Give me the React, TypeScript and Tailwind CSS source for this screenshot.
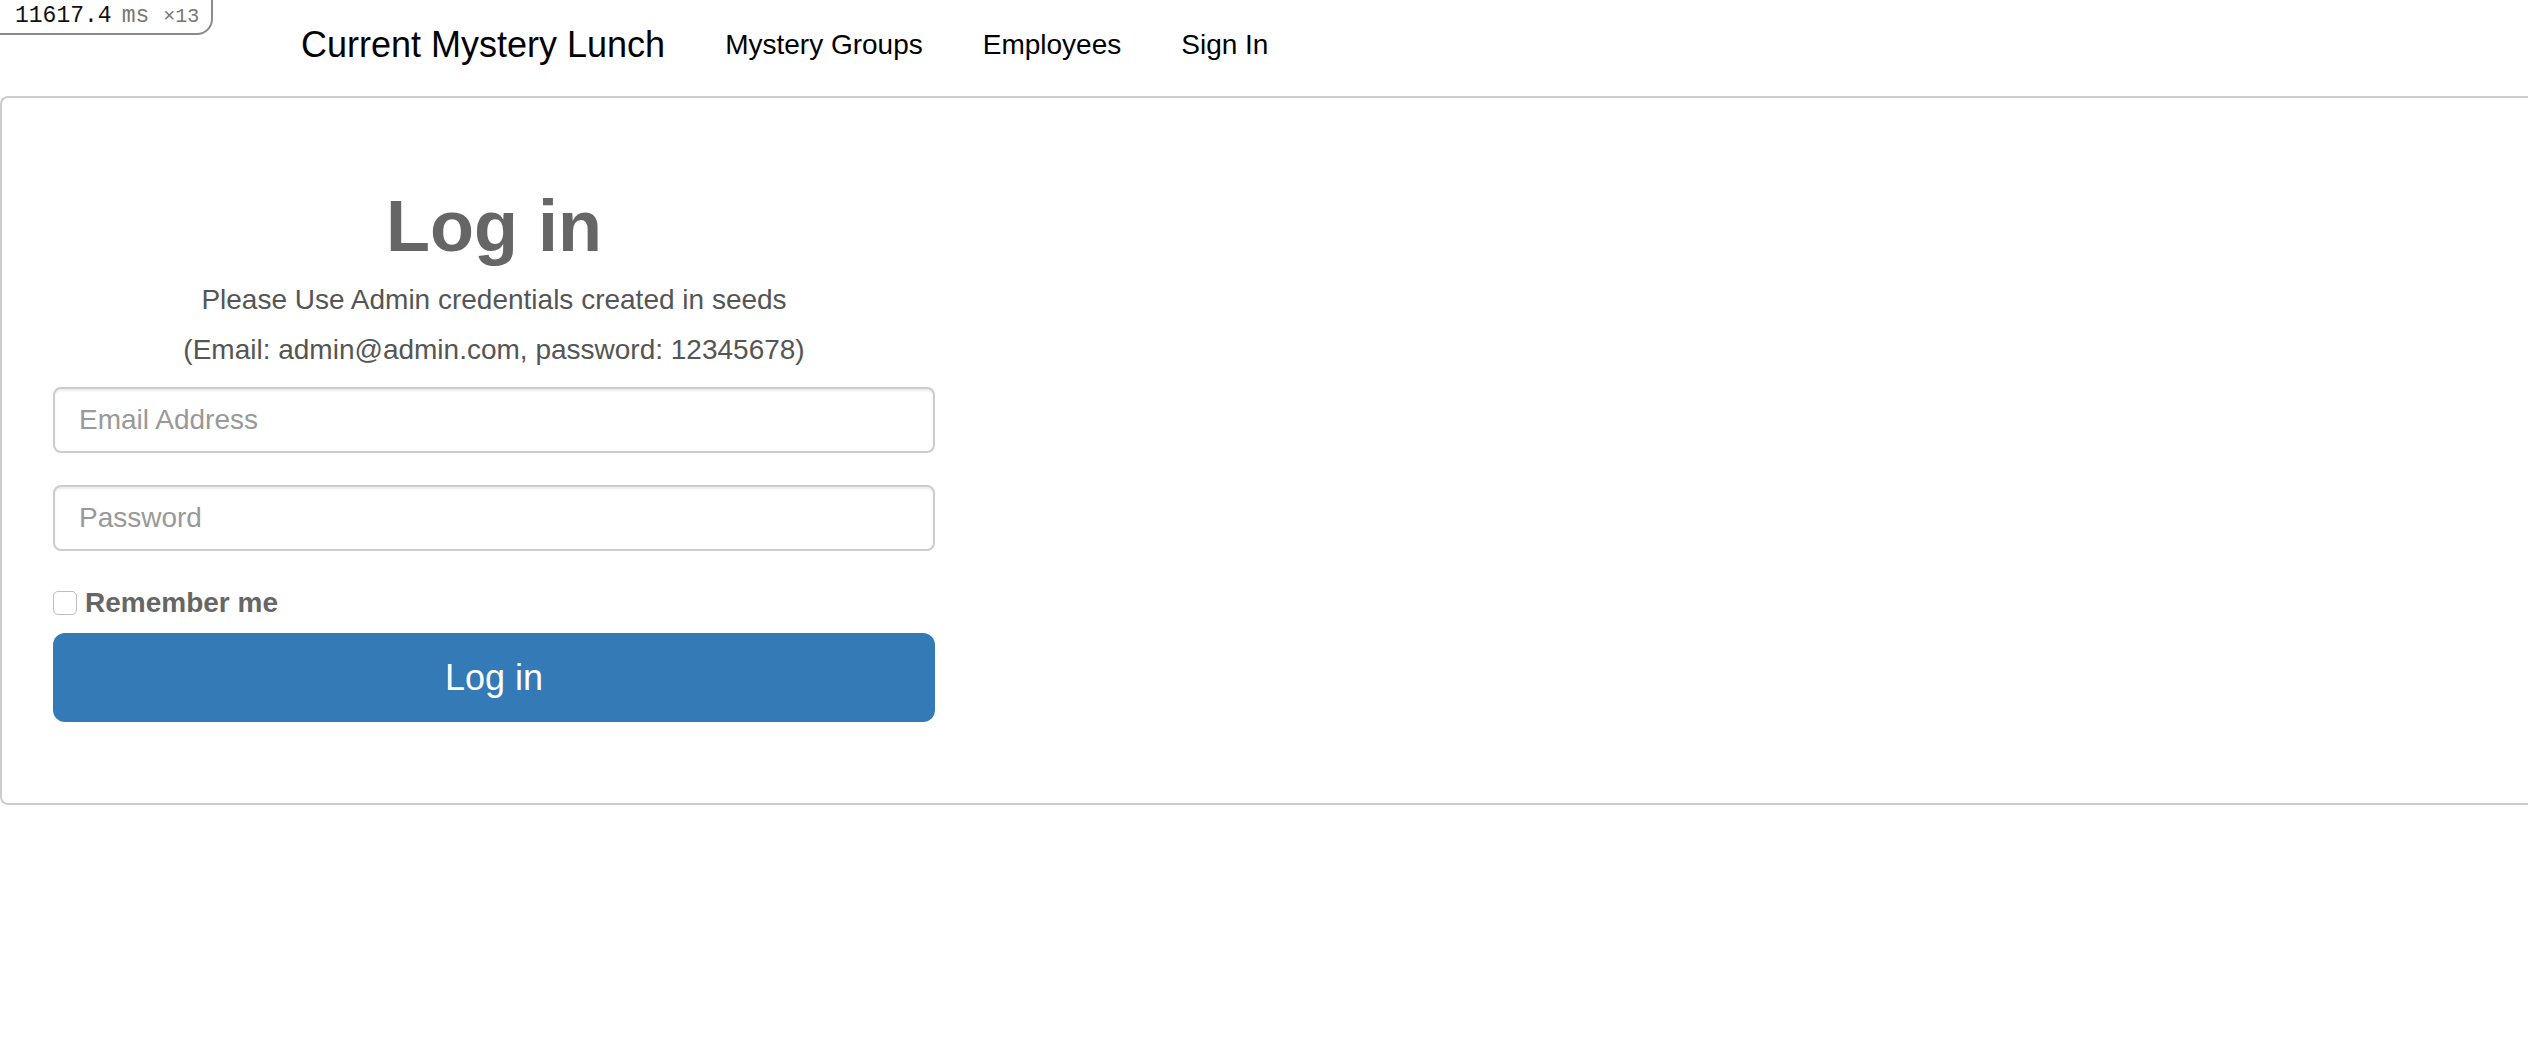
import React from "react";

const sans = { fontFamily: '"Liberation Sans", Arial, Helvetica, sans-serif' };

function ProfilerBadge() {
  return (
    <div
      className="absolute left-[-2px] top-[-2px] flex h-[37px] w-[215px] items-center gap-[10px] rounded-br-[16px] border-2 border-[#8a8a8a] bg-white pl-[15px]"
      style={{ fontFamily: '"Liberation Mono", "Courier New", monospace' }}
    >
      <span className="text-[23px] leading-none text-[#111]">11617.4</span>
      <span className="text-[23px] leading-none text-[#777]">ms</span>
      <span className="ml-[4px] text-[20px] leading-none text-[#777]">×13</span>
    </div>
  );
}

function NavBar() {
  return (
    <nav className="flex h-[96px] items-center gap-[60px] pb-[6px] pl-[301px]">
      <a className="text-[36px] leading-none text-black">Current Mystery Lunch</a>
      <a className="text-[28px] leading-none text-black">Mystery Groups</a>
      <a className="text-[28px] leading-none text-black">Employees</a>
      <a className="text-[28px] leading-none text-black">Sign In</a>
    </nav>
  );
}

function LoginForm() {
  return (
    <div className="flex w-[882px] flex-col">
      <h1 className="mt-[89px] text-center text-[72px] font-bold leading-[79px] text-[#666]">
        Log in
      </h1>
      <p className="mt-[14px] text-center text-[28px] leading-[40px] text-[#555]">
        Please Use Admin credentials created in seeds
      </p>
      <p className="mt-[10px] text-center text-[28px] leading-[40px] text-[#555]">
        (Email: admin@admin.com, password: 12345678)
      </p>
      <input
        type="email"
        placeholder="Email Address"
        className="mt-[17px] h-[66px] w-full rounded-[8px] border-2 border-[#ccc] px-[24px] text-[28px] text-[#555] shadow-[inset_0_2px_2px_rgba(0,0,0,0.075)] outline-none placeholder:text-[#999]"
        style={sans}
      />
      <input
        type="password"
        placeholder="Password"
        className="mt-[32px] h-[66px] w-full rounded-[8px] border-2 border-[#ccc] px-[24px] text-[28px] text-[#555] shadow-[inset_0_2px_2px_rgba(0,0,0,0.075)] outline-none placeholder:text-[#999]"
        style={sans}
      />
      <label className="mt-[32px] flex h-[40px] items-center gap-[8px]">
        <input
          type="checkbox"
          className="h-[24px] w-[24px] appearance-none rounded-[5px] border border-[#bdbdbd] bg-white"
        />
        <span className="text-[28px] font-bold leading-none text-[#666]">Remember me</span>
      </label>
      <button
        className="mt-[10px] h-[89px] w-full rounded-[12px] bg-[#337ab7] text-[36px] text-white"
        style={sans}
      >
        Log in
      </button>
    </div>
  );
}

export default function App() {
  return (
    <div className="relative min-h-[1052px] w-full overflow-hidden bg-white" style={sans}>
      <ProfilerBadge />
      <NavBar />
      <section className="rounded-l-[8px] border-y-2 border-l-2 border-[#ccc] pb-[81px] pl-[51px]">
        <LoginForm />
      </section>
    </div>
  );
}
